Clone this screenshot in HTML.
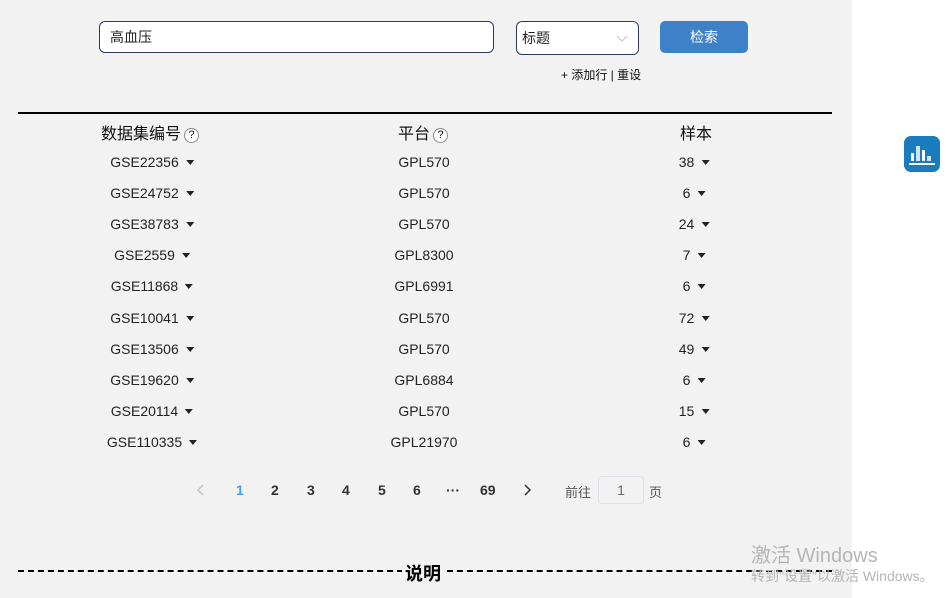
<!DOCTYPE html>
<html><head><meta charset="utf-8"><style>
*{margin:0;padding:0;box-sizing:border-box}
body{width:946px;height:598px;overflow:hidden;background:#fff;font-family:"Liberation Sans","Noto Sans CJK SC",sans-serif;position:relative;color:#222}
.main{position:absolute;left:0;top:0;width:852px;height:598px;background:#f2f2f2}
.a{position:absolute;white-space:nowrap}
.inp{left:99px;top:21px;width:395px;height:32px;border:1px solid #2d3a5e;border-radius:6px;background:#fff;font-size:14px;line-height:30px;padding-left:10px}
.sel{left:516px;top:21px;width:123px;height:34px;border:1px solid #2d3a5e;border-radius:6px;background:#fff;font-size:14px;line-height:32px;padding-left:5px}
.btn{left:660px;top:21px;width:88px;height:32px;background:#3d82c8;border-radius:5px;color:#fff;font-size:14px;line-height:32px;text-align:center}
.hd{font-size:16px;top:120px;color:#111}
.q{display:inline-block;width:15px;height:15px;border:1px solid #888;border-radius:50%;font-size:11px;line-height:13px;text-align:center;vertical-align:1px;margin-left:3px;background:#fff}
.c{font-size:14px;transform:translateX(-50%);color:#222}
.tri{display:inline-block;width:0;height:0;border-left:4px solid transparent;border-right:4px solid transparent;border-top:5px solid #222;vertical-align:2px;margin-left:7px}
.pg{top:482px;font-size:14px;font-weight:bold;color:#303133}
</style></head><body>
<div class="main">
<div class="a inp">高血压</div>
<div class="a sel">标题<svg style="position:absolute;right:10px;top:13px" width="12" height="7"><path d="M1 1L6 6L11 1" stroke="#c0c4cc" fill="none"/></svg></div>
<div class="a btn">检索</div>
<div class="a" style="left:561px;top:66px;font-size:12px;color:#111">+ 添加行 | 重设</div>
<div class="a" style="left:18px;top:112px;width:814px;height:2px;background:#000"></div>
<div class="a hd" style="left:101px">数据集编号<span class="q">?</span></div>
<div class="a hd" style="left:398px">平台<span class="q">?</span></div>
<div class="a hd" style="left:680px">样本</div>
<div id="rows"></div>
<svg class="a" style="left:197px;top:484px" width="8" height="12"><path d="M6 1L1 6L6 11" stroke="#c0c4cc" stroke-width="1.5" fill="none"/></svg>
<div class="a pg" style="left:236px;color:#409eff">1</div>
<div class="a pg" style="left:271px">2</div>
<div class="a pg" style="left:307px">3</div>
<div class="a pg" style="left:342px">4</div>
<div class="a pg" style="left:378px">5</div>
<div class="a pg" style="left:413px">6</div>
<div class="a pg" style="left:446px">···</div>
<div class="a pg" style="left:480px">69</div>
<svg class="a" style="left:523px;top:484px" width="8" height="12"><path d="M2 1L7 6L2 11" stroke="#303133" stroke-width="1.5" fill="none"/></svg>
<div class="a" style="left:565px;top:482px;font-size:13px;color:#555">前往</div>
<div class="a" style="left:598px;top:476px;width:46px;height:28px;border:1px solid #dcdfe6;border-radius:4px;background:#f2f2f2;text-align:center;line-height:26px;font-size:14px;color:#666">1</div>
<div class="a" style="left:649px;top:482px;font-size:13px;color:#555">页</div>
<div class="a" style="left:18px;top:570px;width:814px;border-top:2px dashed #000"></div>
<div class="a" style="left:402px;top:560px;font-size:18px;font-weight:bold;background:#f2f2f2;padding:0 3px;color:#000">说明</div>
</div>
<div class="a" style="left:904px;top:136px;width:36px;height:36px;background:#1a7bbf;border-radius:7px">
<svg width="36" height="36"><rect x="7" y="17" width="3" height="8" fill="#fff"/><rect x="12" y="10" width="4" height="15" fill="#cfe3f3"/><rect x="18" y="14" width="3" height="11" fill="#fff"/><rect x="23" y="20" width="4" height="5" fill="#cfe3f3"/><rect x="5" y="27" width="26" height="2" fill="#fff"/></svg></div>
<div class="a" style="left:751px;top:539px;font-size:20px;color:#b5b5b5">激活 Windows</div>
<div class="a" style="left:751px;top:566px;font-size:14px;color:#b5b5b5">转到"设置"以激活 Windows。</div>
<script>
var d=[["GSE22356","GPL570","38"],["GSE24752","GPL570","6"],["GSE38783","GPL570","24"],["GSE2559","GPL8300","7"],["GSE11868","GPL6991","6"],["GSE10041","GPL570","72"],["GSE13506","GPL570","49"],["GSE19620","GPL6884","6"],["GSE20114","GPL570","15"],["GSE110335","GPL21970","6"]];
var h="";d.forEach(function(r,i){var t=154+i*31.1;
h+='<div class="a c" style="left:152px;top:'+t+'px">'+r[0]+'<span class="tri"></span></div>';
h+='<div class="a c" style="left:424px;top:'+t+'px">'+r[1]+'</div>';
h+='<div class="a c" style="left:694px;top:'+t+'px">'+r[2]+'<span class="tri"></span></div>';});
document.getElementById("rows").innerHTML=h;
</script>
</body></html>
